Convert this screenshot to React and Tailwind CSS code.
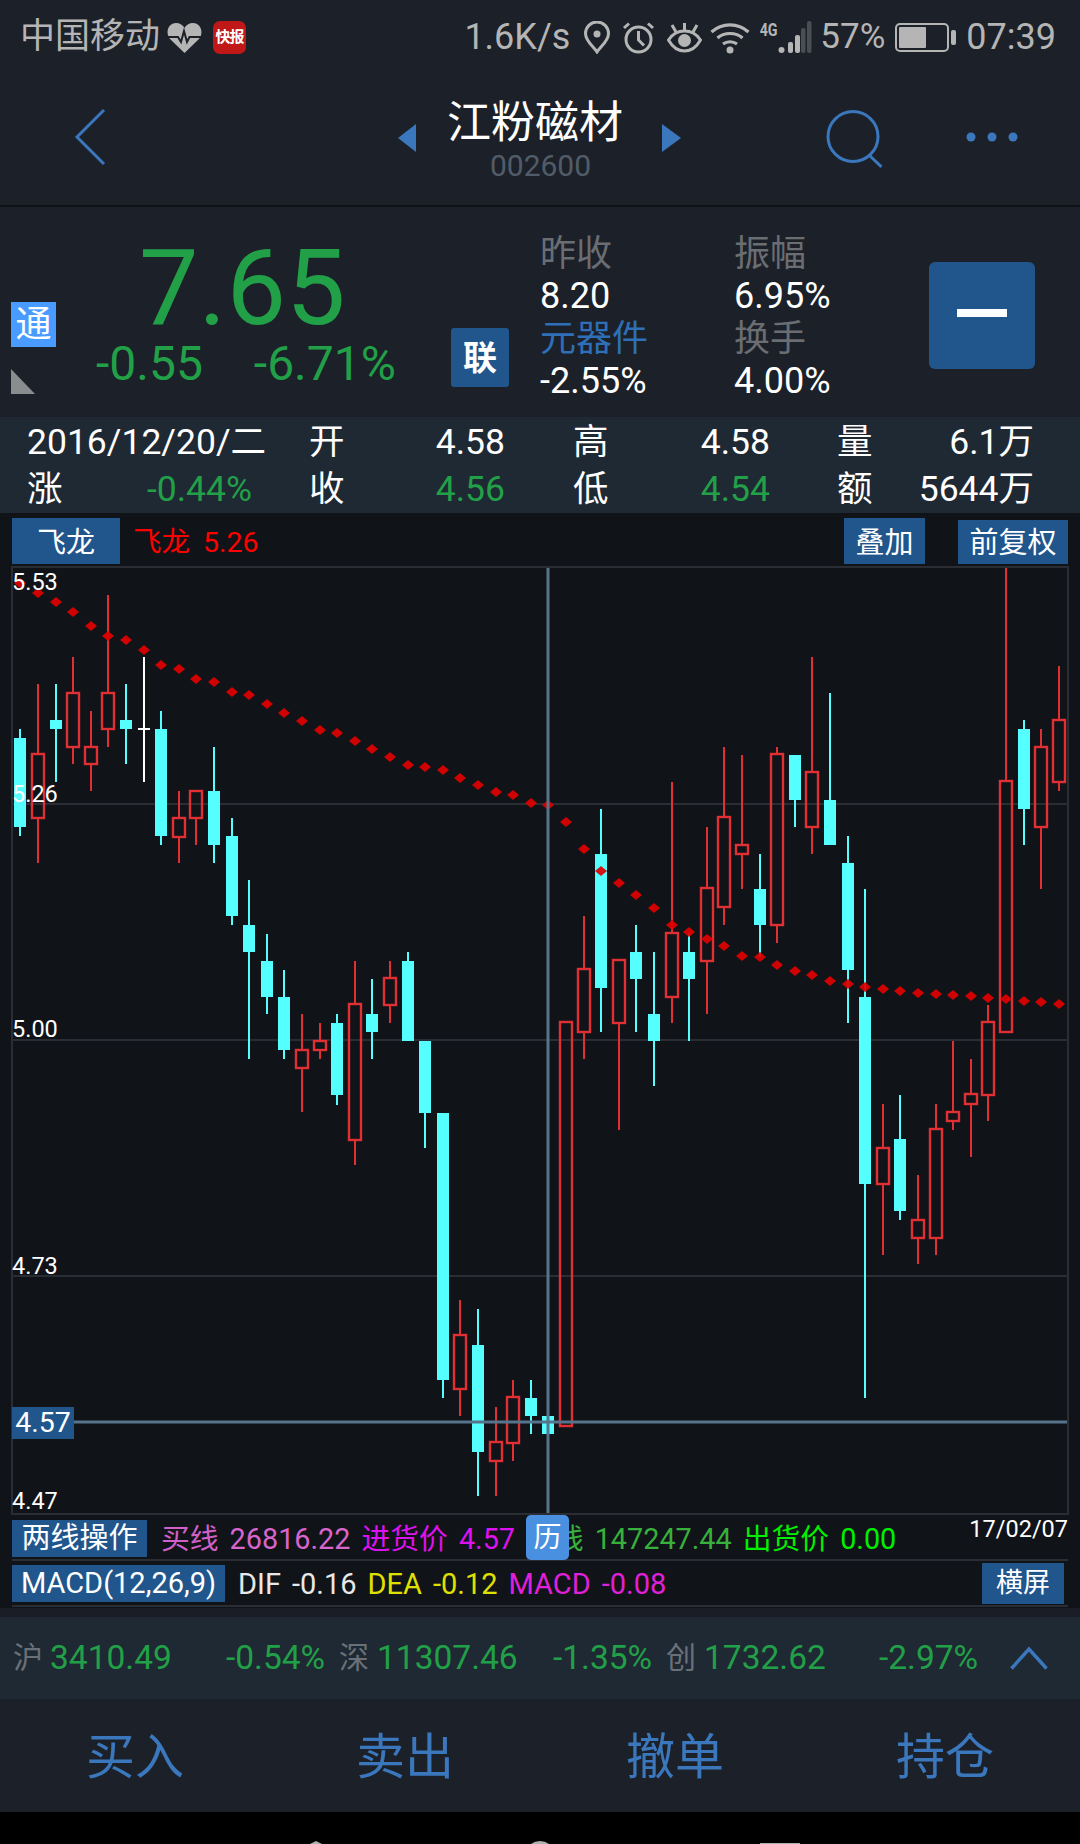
import React from "react";

const C = [
  [20,"c",738,827,729,836],[38,"r",754,818,684,863],[56,"c",720,729,684,782],[73,"r",693,747,657,764],
  [91,"r",747,764,711,791],[108,"r",693,729,595,747],[126,"c",720,729,684,764],[161,"c",729,836,711,845],
  [179,"r",818,837,791,863],[196,"r",791,818,791,845],[214,"c",791,845,747,863],[232,"c",836,916,818,925],
  [249,"c",925,952,880,1059],[267,"c",961,997,934,1014],[284,"c",997,1050,970,1059],[302,"r",1050,1068,1014,1112],
  [320,"r",1041,1050,1023,1059],[337,"c",1023,1095,1014,1105],[355,"r",1004,1140,961,1165],[372,"c",1014,1032,979,1059],
  [390,"r",978,1005,961,1023],[408,"c",961,1041,952,1041],[425,"c",1041,1113,1041,1148],[443,"c",1113,1380,1113,1398],
  [460,"r",1335,1389,1300,1416],[478,"c",1345,1452,1309,1496],[496,"r",1442,1461,1407,1496],[513,"r",1397,1443,1380,1461],
  [531,"c",1398,1416,1380,1434],[548,"c",1416,1434,1416,1434],[566,"r",1022,1426,1022,1426],[584,"r",969,1032,916,1059],
  [601,"c",854,988,809,1032],[619,"r",960,1023,960,1130],[636,"c",952,979,925,1032],[654,"c",1014,1041,952,1086],
  [672,"r",933,997,782,1023],[689,"c",952,979,933,1041],[707,"r",888,961,827,1014],[724,"r",817,907,747,925],
  [742,"r",845,854,755,889],[760,"c",889,925,854,957],[777,"r",754,925,747,943],[795,"c",755,800,755,827],
  [812,"r",772,827,657,854],[830,"c",800,845,693,845],[848,"c",863,970,836,1023],[865,"c",997,1184,889,1398],
  [883,"r",1148,1184,1104,1255],[900,"c",1139,1211,1095,1220],[918,"r",1220,1238,1175,1264],[936,"r",1129,1238,1104,1255],
  [953,"r",1112,1121,1041,1130],[971,"r",1094,1104,1059,1157],[988,"r",1022,1095,1005,1121],[1006,"r",781,1032,568,1032],
  [1024,"c",729,809,720,845],[1041,"r",747,827,729,889],[1059,"r",720,782,666,791],
];
const D = [
  [20,583],[38,593],[56,602],[73,612],[91,626],[108,636],[126,640],[144,650],[161,665],[179,669],[196,679],[214,682],
  [232,692],[249,695],[267,704],[284,713],[302,721],[320,730],[337,733],[355,741],[372,749],[390,757],[408,765],[425,767],
  [443,770],[460,778],[478,785],[496,792],[513,795],[531,803],[548,805],[566,822],[584,849],[601,871],[619,883],[636,895],
  [654,908],[672,925],[689,932],[707,939],[724,946],[742,956],[760,957],[777,965],[795,971],[812,975],[830,981],[848,984],
  [865,987],[883,989],[900,991],[918,993],[936,994],[953,995],[971,996],[988,998],[1006,999],[1024,1001],[1041,1002],[1059,1004],
];

function Chart() {
  const RED = "#e03034", CY = "#55ffff";
  return (
    <svg className="absolute inset-0 w-full h-full" viewBox="13 568 1054 945">
      <rect x="12" y="803" width="1056" height="2" fill="#2a2d33" />
      <rect x="12" y="1039" width="1056" height="2" fill="#2a2d33" />
      <rect x="12" y="1275" width="1056" height="2" fill="#2a2d33" />
      <rect x="143" y="657" width="2" height="125" fill="#fff" />
      <rect x="138" y="728" width="12" height="2" fill="#fff" />
      {C.map(([x, t, bt, bb, wt, wb]) =>
        t === "c" ? (
          <g key={x}>
            <rect x={x - 1} y={wt} width="2" height={wb - wt} fill={CY} />
            <rect x={x - 6} y={bt} width="12" height={bb - bt} fill={CY} />
          </g>
        ) : (
          <g key={x}>
            <rect x={x - 1} y={wt} width="2" height={Math.max(bt - wt, 0)} fill={RED} />
            <rect x={x - 1} y={bb} width="2" height={Math.max(wb - bb, 0)} fill={RED} />
            <rect x={x - 6} y={bt} width="12" height={bb - bt} fill="none" stroke={RED} strokeWidth="2.4" />
          </g>
        )
      )}
      {D.map(([x, y]) => (
        <polygon key={x} points={`${x - 6},${y} ${x},${y - 5} ${x + 6},${y} ${x},${y + 5}`} fill="#e00000" opacity="0.92" />
      ))}
      <rect x="546.5" y="567" width="3" height="947" fill="#56748c" />
      <rect x="12" y="1420.5" width="1056" height="3" fill="#56748c" />
    </svg>
  );
}

function Pair({ l, v, g, w }) {
  return (
    <div className={`flex items-center justify-between whitespace-nowrap ${w}`}>
      <span className="text-white">{l}</span>
      <span className={g ? "text-[#22a048]" : "text-white"}>{v}</span>
    </div>
  );
}

function StatusIcons() {
  const s = "#b5b5b5";
  return (
    <>
      <svg className="ml-[14px]" width="26" height="33" viewBox="0 0 26 33">
        <path d="M13 31C9 25 1.5 20 1.5 12.5A11.5 11.5 0 0 1 24.5 12.5C24.5 20 17 25 13 31Z" fill="none" stroke={s} strokeWidth="3" />
        <circle cx="13" cy="13" r="3.5" fill={s} />
      </svg>
      <svg className="ml-[12px]" width="33" height="33" viewBox="0 0 33 33">
        <circle cx="16.5" cy="18.5" r="12.5" fill="none" stroke={s} strokeWidth="3" />
        <path d="M16.5 10V19L22 24.5" fill="none" stroke={s} strokeWidth="3" />
        <path d="M2 7L7 2.5M31 7L26 2.5" fill="none" stroke={s} strokeWidth="3" />
      </svg>
      <svg className="ml-[12px]" width="35" height="31" viewBox="0 0 35 31">
        <path d="M1.5 18C6 11 11 9 17.5 9S29 11 33.5 18C29 26 24 29 17.5 29S6 26 1.5 18Z" fill="none" stroke={s} strokeWidth="3" />
        <circle cx="17.5" cy="18.5" r="6.5" fill={s} />
        <path d="M17.5 1V9M5 3L9 10M30 3L26 10" fill="none" stroke={s} strokeWidth="3" />
      </svg>
      <svg className="ml-[8px]" width="40" height="33" viewBox="0 0 40 33">
        <path d="M1.5 11C12 1.5 28 1.5 38.5 11M7.5 17C14 11 26 11 32.5 17M13 23C17 20 23 20 27 23" fill="none" stroke={s} strokeWidth="3.2" />
        <circle cx="20" cy="29" r="3.5" fill={s} />
      </svg>
      <div className="ml-[10px] w-[17px] h-[33px] flex justify-center">
        <span className="text-[19px] leading-[17px] h-[17px] font-bold text-[#b5b5b5] scale-x-75 tracking-tight">4G</span>
      </div>
      <svg className="ml-[1px]" width="34" height="33" viewBox="0 0 34 33">
        <circle cx="3.5" cy="29" r="3" fill={s} />
        <rect x="10" y="21" width="5" height="11" rx="2" fill={s} />
        <rect x="17" y="14" width="5" height="18" rx="2" fill={s} />
        <rect x="23" y="7" width="4.5" height="25" rx="2" fill="#4a4d52" />
        <rect x="29" y="0" width="4.5" height="32" rx="2" fill="#4a4d52" />
      </svg>
    </>
  );
}

export default function App() {
  return (
    <div className="w-[1080px] h-[1844px] overflow-hidden bg-black [font-family:Roboto,'Noto_Sans_CJK_SC',sans-serif]">
      {/* status bar */}
      <div className="h-[62px] bg-[#1c2129] flex items-center justify-between text-[#b5b5b5] pl-[20px] pr-[24px] pt-[12px] text-[35px] leading-[40px]">
        <div className="flex items-center">
          <span>中国移动</span>
          <svg className="ml-[7px]" width="35" height="31" viewBox="0 0 35 31">
            <path d="M17.5 31L3 17C-2 11 1 1 9 1C13 1 16 3 17.5 6C19 3 22 1 26 1C34 1 37 11 32 17Z" fill="#b5b5b5" />
            <path d="M0 15H11L14 20L17 9L20 20L22.5 15H35" fill="none" stroke="#1c2129" strokeWidth="2" />
          </svg>
          <div className="ml-[11px] w-[33px] h-[33px] rounded-[7px] bg-[#c01818] flex items-center justify-center text-white text-[15px] leading-none font-bold tracking-[-1px] whitespace-nowrap">快报</div>
        </div>
        <div className="flex items-center text-[36px]">
          <span>1.6K/s</span>
          <StatusIcons />
          <span className="ml-[8px] text-[35px]">57%</span>
          <div className="ml-[10px] relative w-[54px] h-[29px] border-2 border-[#b5b5b5] rounded-[5px] p-[2px]">
            <div className="w-[27px] h-full bg-[#b5b5b5] rounded-[1px]" />
            <div className="absolute right-[-9px] top-[5px] w-[5px] h-[15px] bg-[#b5b5b5] rounded-[2px]" />
          </div>
          <span className="ml-[17px]">07:39</span>
        </div>
      </div>

      {/* header */}
      <div className="h-[143px] bg-[#1c2129] flex items-start">
        <svg className="ml-[74px] mt-[46px]" width="32" height="58" viewBox="0 0 32 58">
          <path d="M30 2L3 29L30 56" fill="none" stroke="#3a77bd" strokeWidth="3" />
        </svg>
        <svg className="ml-[292px] mt-[62px]" width="18" height="28" viewBox="0 0 18 28">
          <path d="M18 0V28L0 14Z" fill="#3a77bd" />
        </svg>
        <div className="ml-[31px] w-[176px] flex flex-col items-center">
          <div className="text-white text-[44px] leading-[56px] mt-[33px] whitespace-nowrap">江粉磁材</div>
          <div className="text-[#525c68] text-[30px] leading-[36px] mt-[-3px] ml-[11px]">002600</div>
        </div>
        <svg className="ml-[39px] mt-[62px]" width="19" height="28" viewBox="0 0 19 28">
          <path d="M0 0V28L19 14Z" fill="#3a77bd" />
        </svg>
        <svg className="ml-[145px] mt-[47px]" width="60" height="60" viewBox="0 0 60 60">
          <circle cx="27" cy="27.5" r="25" fill="none" stroke="#3a77bd" strokeWidth="3" />
          <path d="M43 46L57 56" fill="none" stroke="#3a77bd" strokeWidth="3" transform="rotate(8 43 46)" />
        </svg>
        <svg className="ml-[80px] mt-[70px]" width="52" height="10" viewBox="0 0 52 10">
          <circle cx="5" cy="5" r="4.5" fill="#3a77bd" />
          <circle cx="26" cy="5" r="4.5" fill="#3a77bd" />
          <circle cx="47" cy="5" r="4.5" fill="#3a77bd" />
        </svg>
      </div>
      <div className="h-[2px] bg-[#0f1217]" />

      {/* quote */}
      <div className="h-[210px] bg-[#1c2129] flex items-start">
        <div className="w-[56px] pl-[11px] pt-[95px] flex flex-col">
          <div className="w-[45px] h-[45px] bg-[#4a9bff] flex items-center justify-center text-white text-[36px] leading-none">通</div>
          <svg className="mt-[22px]" width="24" height="25" viewBox="0 0 24 25">
            <path d="M0 0L24 25H0Z" fill="#8a8d90" />
          </svg>
        </div>
        <div className="w-[395px] pt-[33px] text-[#22a048]">
          <div className="pl-[83px] h-[96px] text-[106px] leading-[96px]">7.65</div>
          <div className="pl-[40px] h-[56px] flex items-center text-[48px] leading-[56px] whitespace-nowrap">
            <span>-0.55</span>
            <span className="ml-[51px]">-6.71%</span>
          </div>
        </div>
        <div className="mt-[121px] w-[58px] h-[59px] rounded-[3px] bg-[#20568c] flex items-center justify-center text-white text-[34px] leading-none font-bold">联</div>
        <div className="ml-[31px] mt-[25.5px] grid grid-cols-[194px_195px] text-[36px] leading-[42.5px] whitespace-nowrap">
          <div className="text-[#6a6d72]">昨收</div>
          <div className="text-[#6a6d72]">振幅</div>
          <div className="text-white">8.20</div>
          <div className="text-white">6.95%</div>
          <div className="text-[#2f6fb8]">元器件</div>
          <div className="text-[#6a6d72]">换手</div>
          <div className="text-white">-2.55%</div>
          <div className="text-white">4.00%</div>
        </div>
        <div className="mt-[55px] w-[106px] h-[107px] rounded-[6px] bg-[#20568c] flex items-center justify-center">
          <div className="w-[50px] h-[8px] bg-white mb-[5px]" />
        </div>
      </div>

      {/* detail */}
      <div className="h-[96px] bg-[#1f2933] text-[35.5px] leading-[47px] pt-[2px]">
        <div className="h-[47px] flex pl-[27px]">
          <div className="w-[225px] text-white whitespace-nowrap">2016/12/20/二</div>
          <Pair l="开" v="4.58" w="ml-[57px] w-[196px]" />
          <Pair l="高" v="4.58" w="ml-[68px] w-[197px]" />
          <Pair l="量" v="6.1万" w="ml-[67px] w-[197px]" />
        </div>
        <div className="h-[47px] flex pl-[27px]">
          <Pair l="涨" v="-0.44%" g w="w-[225px]" />
          <Pair l="收" v="4.56" g w="ml-[57px] w-[196px]" />
          <Pair l="低" v="4.54" g w="ml-[68px] w-[197px]" />
          <Pair l="额" v="5644万" w="ml-[67px] w-[197px]" />
        </div>
      </div>

      {/* chart section */}
      <div className="relative h-[1095px] bg-[#101318]">
        <div className="h-[53px] flex items-end pb-[2px] pl-[12px] pr-[12px] text-[29px] leading-none">
          <div className="w-[108px] h-[46px] pt-[4px] bg-[#20568c] text-white flex items-center justify-center">飞龙</div>
          <div className="ml-[13px] h-[46px] pt-[4px] flex items-center text-[#ff0000] text-[28.5px] gap-[13px]">
            <span>飞龙</span>
            <span>5.26</span>
          </div>
          <div className="ml-auto w-[81px] h-[46px] pt-[4px] bg-[#20568c] text-white flex items-center justify-center">叠加</div>
          <div className="ml-[33px] w-[110px] h-[44px] pt-[2px] bg-[#20568c] text-white flex items-center justify-center">前复权</div>
        </div>

        <div className="relative ml-[11px] w-[1058px] h-[949px] border-2 border-[#2a2d33]">
          <Chart />
          <span className="absolute left-[-1px] top-[2px] text-white text-[23.5px] leading-[24px]">5.53</span>
          <span className="absolute left-[-1px] top-[214px] text-white text-[23.5px] leading-[24px]">5.26</span>
          <span className="absolute left-[-1px] top-[449px] text-white text-[23.5px] leading-[24px]">5.00</span>
          <span className="absolute left-[-1px] top-[686px] text-white text-[23.5px] leading-[24px]">4.73</span>
          <span className="absolute left-[-1px] top-[921px] text-white text-[23.5px] leading-[24px]">4.47</span>
          <div className="absolute left-[-1px] top-[839px] w-[62px] h-[32px] bg-[#20568c] text-white text-[28.5px] leading-none flex items-center justify-center">4.57</div>
        </div>

        {/* row 1 */}
        <div className="relative h-[46px] ml-[12px] w-[1056px] border-b-2 border-[#2a2d33] flex items-center gap-[11px] text-[28.8px] leading-none whitespace-nowrap pt-[2px]">
          <div className="w-[135px] h-[37px] mr-[3px] bg-[#20568c] text-white text-[29px] flex items-center justify-center">两线操作</div>
          <span className="text-[#d060c8] pt-[2px]">买线</span>
          <span className="text-[#d864cc] pt-[2px]">26816.22</span>
          <span className="text-[#dd12ee] pt-[2px]">进货价</span>
          <span className="text-[#dd12ee] pt-[2px]">4.57</span>
          <span className="text-[#38b03c] pt-[2px]">卖线</span>
          <span className="text-[#38b03c] pt-[2px]">147247.44</span>
          <span className="text-[#00f000] pt-[2px]">出货价</span>
          <span className="text-[#00f000] pt-[2px]">0.00</span>
          <span className="absolute right-0 top-[2px] text-white text-[23.5px] leading-[24px]">17/02/07</span>
        </div>

        {/* row 2 */}
        <div className="h-[46px] ml-[12px] w-[1056px] border-b-2 border-[#2a2d33] flex items-center gap-[11px] text-[29px] leading-none whitespace-nowrap">
          <div className="w-[213px] h-[37px] mr-[2px] bg-[#20568c] text-white flex items-center justify-center">MACD(12,26,9)</div>
          <span className="text-[#e8e8e8] pt-[2px]">DIF</span>
          <span className="text-[#e8e8e8] pt-[2px]">-0.16</span>
          <span className="text-[#e0e000] pt-[2px]">DEA</span>
          <span className="text-[#e0e000] pt-[2px]">-0.12</span>
          <span className="text-[#e020d8] pt-[2px]">MACD</span>
          <span className="text-[#e020d8] pt-[2px]">-0.08</span>
          <div className="ml-auto mr-[4px] w-[82px] h-[41px] bg-[#20568c] text-white text-[27px] flex items-center justify-center">横屏</div>
        </div>

        {/* crosshair tag */}
        <div className="absolute left-[526px] top-[1002px] w-[43px] h-[45px] rounded-[5px] bg-[#4a90e0] text-white text-[28px] leading-none flex items-center justify-center">历</div>
      </div>

      <div className="h-[9px] bg-[#1a1d26]" />

      {/* index bar */}
      <div className="h-[82px] bg-[#1f2933] flex items-center text-[33.5px] leading-none whitespace-nowrap text-[#22a048]">
        <span className="ml-[13px] w-[37px] text-[#6a7078] text-[30px]">沪</span>
        <span className="w-[176px]">3410.49</span>
        <span className="w-[113px]">-0.54%</span>
        <span className="w-[38px] text-[#6a7078] text-[30px]">深</span>
        <span className="w-[176px]">11307.46</span>
        <span className="w-[113px]">-1.35%</span>
        <span className="w-[38px] text-[#6a7078] text-[30px]">创</span>
        <span className="w-[175px]">1732.62</span>
        <span className="w-[131px]">-2.97%</span>
        <svg width="38" height="24" viewBox="0 0 38 24">
          <path d="M1.5 22.5L19 3L36.5 22.5" fill="none" stroke="#3a77bd" strokeWidth="3.5" />
        </svg>
      </div>

      {/* tabs */}
      <div className="h-[113px] bg-[#1c2129] grid grid-cols-4 text-[49px] text-[#3a77bd] leading-none pt-[3px]">
        <div className="flex items-center justify-center">买入</div>
        <div className="flex items-center justify-center">卖出</div>
        <div className="flex items-center justify-center">撤单</div>
        <div className="flex items-center justify-center">持仓</div>
      </div>

      {/* nav bar */}
      <svg className="block" width="1080" height="32" viewBox="0 1812 1080 32">
        <path d="M310 1844L316 1841L322 1844Z" fill="#b0b0b0" />
        <circle cx="540" cy="1856" r="15" fill="#b0b0b0" />
        <rect x="760" y="1843" width="40" height="1" fill="#b0b0b0" />
      </svg>
    </div>
  );
}
